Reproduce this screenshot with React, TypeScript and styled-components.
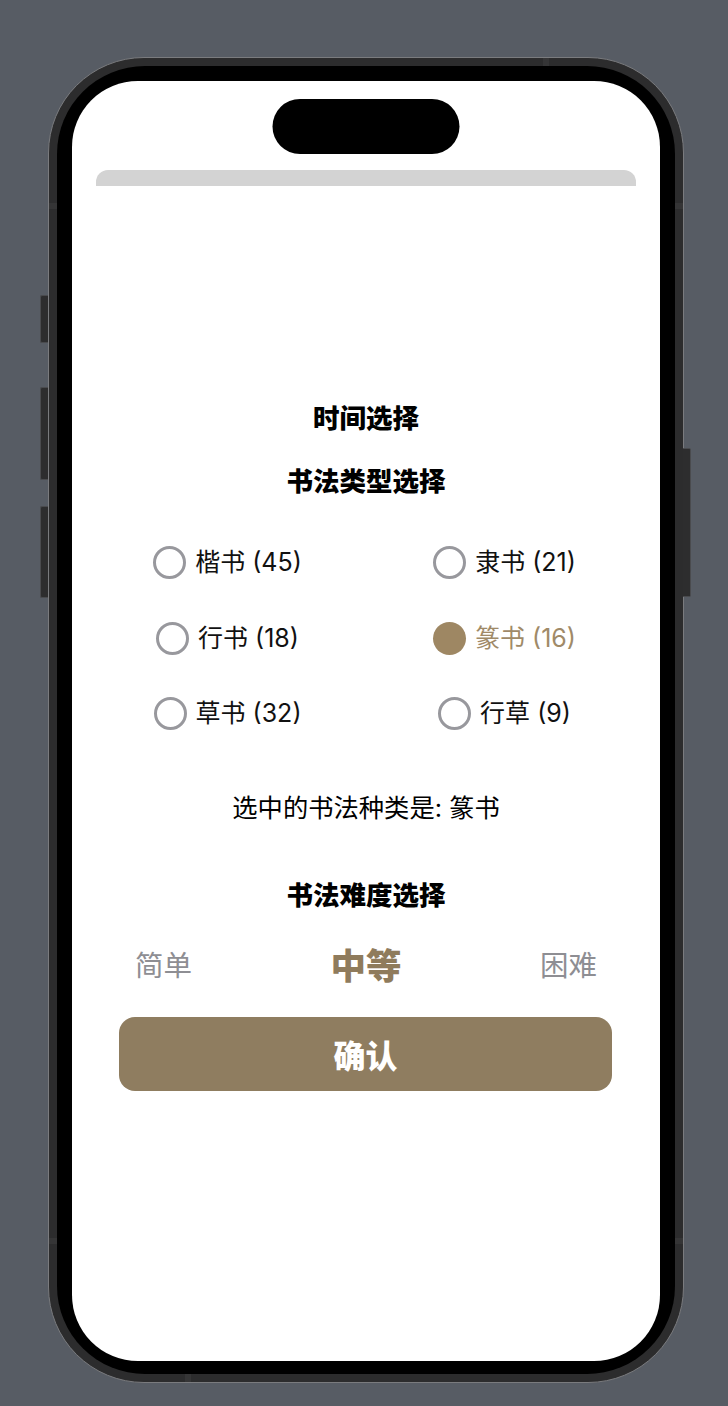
import React, { useState } from "react";
import styled, { createGlobalStyle } from "styled-components";

const GlobalStyle = createGlobalStyle`
  html, body {
    margin: 0;
    padding: 0;
    background: #575c64;
  }
  body {
    font-family: Inter, "Noto Sans CJK SC", sans-serif;
  }
  * { box-sizing: border-box; }
`;

const Page = styled.div`
  width: 728px;
  height: 1406px;
  padding: 57px 0 0 48px;
  background: #575c64;
`;

const PhoneFrame = styled.div`
  position: relative;
  width: 636px;
  height: 1326px;
  border: 1px solid #7a7b7e;
  border-radius: 96px;
  background: #2c2c2d;
  padding: 8px;
`;

const SideButton = styled.div<{ $side: "left" | "right"; $top: number; $height: number }>`
  position: absolute;
  top: ${(p) => p.$top}px;
  ${(p) => (p.$side === "left" ? "left: -9px;" : "right: -8px;")}
  width: 8px;
  height: ${(p) => p.$height}px;
  background: #2d2d2e;
  border: 1px solid #4a4b4e;
  ${(p) => (p.$side === "left" ? "border-right: none; border-radius: 2px 0 0 2px;" : "border-left: none; border-radius: 0 2px 2px 0;")}
`;

const AntennaMark = styled.div<{ $top?: number; $left?: number; $vertical?: boolean; $side?: string }>`
  position: absolute;
  background: #353536;
  ${(p) =>
    p.$vertical
      ? `left: ${p.$left}px; width: 6px; height: 8px; ${p.$side === "top" ? "top: 0;" : "bottom: 0;"}`
      : `top: ${p.$top}px; height: 6px; width: 8px; ${p.$side === "left" ? "left: 0;" : "right: 0;"}`}
`;

const Bezel = styled.div`
  width: 100%;
  height: 100%;
  background: #000;
  border-radius: 88px;
  padding: 15px;
`;

const Screen = styled.div`
  position: relative;
  width: 100%;
  height: 1280px;
  background: #fff;
  border-radius: 66px;
  overflow: hidden;
  display: flex;
  flex-direction: column;
  padding-top: 89px;
`;

const Island = styled.div`
  position: absolute;
  top: 18px;
  left: 50%;
  transform: translateX(-50%);
  width: 187px;
  height: 55px;
  border-radius: 28px;
  background: #000;
`;

const SheetBar = styled.div`
  margin: 0 24px;
  height: 16px;
  background: #d3d3d3;
  border-radius: 12px 12px 0 0;
`;

const Title = styled.h2<{ $mt: number }>`
  margin: ${(p) => p.$mt}px 0 0;
  text-align: center;
  font-family: Inter, "Noto Sans CJK SC", sans-serif;
  font-size: 26.5px;
  line-height: 32px;
  font-weight: 900;
  color: #000;
`;

const RadioGrid = styled.div`
  margin: 49px auto 0;
  width: 554px;
  display: grid;
  grid-template-columns: 1fr 1fr;
  grid-auto-rows: 33px;
  row-gap: 42.5px;
`;

const RadioItem = styled.button<{ $active: boolean }>`
  justify-self: center;
  display: flex;
  align-items: center;
  gap: 9px;
  height: 33px;
  padding: 0;
  border: none;
  background: none;
  cursor: pointer;
  font-family: Inter, "Noto Sans CJK SC", sans-serif;
  font-size: 25px;
  line-height: 33px;
  color: ${(p) => (p.$active ? "#a08a68" : "#111")};
`;

const RadioCircle = styled.span<{ $active: boolean }>`
  width: 33px;
  height: 33px;
  border-radius: 50%;
  flex-shrink: 0;
  ${(p) =>
    p.$active
      ? "background: #9e8763;"
      : "border: 3px solid #98989d; background: #fff;"}
`;

const SelectedText = styled.p`
  margin: 62px 0 0;
  text-align: center;
  font-family: Inter, "Noto Sans CJK SC", sans-serif;
  font-size: 25.3px;
  line-height: 32px;
  color: #000;
`;

const DifficultyRow = styled.div`
  margin-top: 31px;
  padding: 0 63px;
  display: flex;
  justify-content: space-between;
  align-items: center;
  height: 44px;
`;

const DifficultyOption = styled.span<{ $active: boolean }>`
  font-family: "Noto Sans CJK SC", sans-serif;
  font-size: ${(p) => (p.$active ? "35.5px" : "28.5px")};
  font-weight: ${(p) => (p.$active ? 900 : 400)};
  line-height: 44px;
  color: ${(p) => (p.$active ? "#8f7b5c" : "#8e8e93")};
  cursor: pointer;
`;

const ConfirmButton = styled.button`
  margin: 31px 48px 0 47px;
  height: 74px;
  border: none;
  border-radius: 16px;
  background: #8f7d60;
  color: #fff;
  font-family: "Noto Sans CJK SC", sans-serif;
  font-size: 32px;
  font-weight: 900;
  cursor: pointer;
`;

const types = [
  { name: "楷书", count: 45 },
  { name: "隶书", count: 21 },
  { name: "行书", count: 18 },
  { name: "篆书", count: 16 },
  { name: "草书", count: 32 },
  { name: "行草", count: 9 },
];

const levels = ["简单", "中等", "困难"];

export default function App() {
  const [selected, setSelected] = useState("篆书");
  const [level, setLevel] = useState("中等");

  return (
    <>
      <GlobalStyle />
      <Page>
        <PhoneFrame>
          <SideButton $side="left" $top={237} $height={48} />
          <SideButton $side="left" $top={329} $height={93} />
          <SideButton $side="left" $top={448} $height={92} />
          <SideButton $side="right" $top={390} $height={149} />
          <AntennaMark $side="left" $top={145} />
          <AntennaMark $side="right" $top={145} />
          <AntennaMark $side="left" $top={1180} />
          <AntennaMark $side="right" $top={1180} />
          <AntennaMark $vertical $side="top" $left={494} />
          <AntennaMark $vertical $side="bottom" $left={136} />
          <Bezel>
            <Screen>
              <Island />
              <SheetBar />
              <Title $mt={216}>时间选择</Title>
              <Title $mt={31}>书法类型选择</Title>
              <RadioGrid>
                {types.map((t) => (
                  <RadioItem
                    key={t.name}
                    $active={selected === t.name}
                    onClick={() => setSelected(t.name)}
                  >
                    <RadioCircle $active={selected === t.name} />
                    <span>
                      {t.name} ({t.count})
                    </span>
                  </RadioItem>
                ))}
              </RadioGrid>
              <SelectedText>选中的书法种类是: {selected}</SelectedText>
              <Title $mt={55}>书法难度选择</Title>
              <DifficultyRow>
                {levels.map((l) => (
                  <DifficultyOption
                    key={l}
                    $active={level === l}
                    onClick={() => setLevel(l)}
                  >
                    {l}
                  </DifficultyOption>
                ))}
              </DifficultyRow>
              <ConfirmButton>确认</ConfirmButton>
            </Screen>
          </Bezel>
        </PhoneFrame>
      </Page>
    </>
  );
}
